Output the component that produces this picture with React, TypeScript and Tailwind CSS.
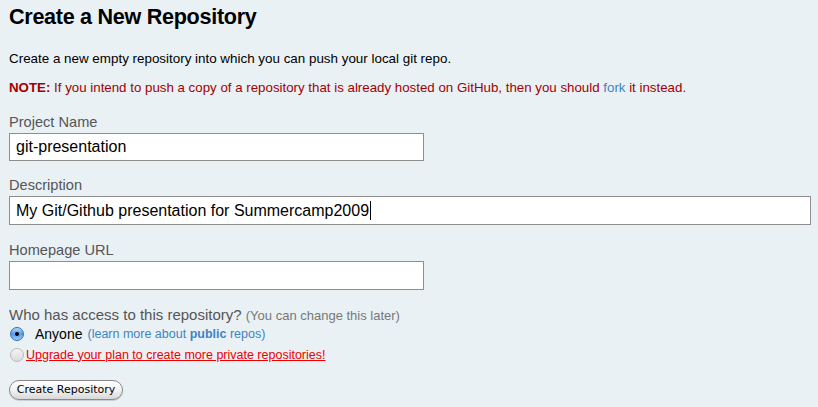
import React from "react";

export default function App() {
  const font = { fontFamily: '"Liberation Sans", Arial, sans-serif' };
  return (
    <div className="w-[818px] h-[407px] bg-[#e9f1f5] overflow-hidden text-black" style={font}>
      <div className="pl-[9px] pr-[8px] pt-[2px]">
        <h1 className="text-[21.6px] leading-[30px] font-bold tracking-[-0.3px]">Create a New Repository</h1>
        <p className="mt-[19px] text-[13.4px] leading-[16px]">
          Create a new empty repository into which you can push your local git repo.
        </p>
        <p className="mt-[13px] text-[13.3px] leading-[16px] text-[#a30000]">
          <b>NOTE:</b> If you intend to push a copy of a repository that is already hosted on GitHub, then you should{" "}
          <span className="text-[#4183c4]">fork</span> it instead.
        </p>

        <div className="mt-[18px] text-[14.6px] leading-[17px] text-[#555]">Project Name</div>
        <div className="mt-[2px] w-[415px] h-[28px] bg-white border border-[#8e8e8e] flex items-center px-[6px] text-[16px]">
          git-presentation
        </div>

        <div className="mt-[16px] text-[14.6px] leading-[17px] text-[#555]">Description</div>
        <div className="mt-[2px] w-[802px] h-[29px] bg-white border border-[#8e8e8e] flex items-center px-[6px] text-[16px]">
          My Git/Github presentation for Summercamp2009
          <span className="inline-block w-[1px] h-[19px] bg-black ml-[1px]" />
        </div>

        <div className="mt-[17px] text-[14.6px] leading-[17px] text-[#555]">Homepage URL</div>
        <div className="mt-[2px] w-[415px] h-[29px] bg-white border border-[#8e8e8e]" />

        <div className="mt-[16px] text-[15px] leading-[17px] text-[#555]">
          Who has access to this repository? <span className="text-[13px] text-[#777]">(You can change this later)</span>
        </div>
        <div className="mt-[1px] flex items-center h-[18px]">
          <span className="ml-[1px] w-[14px] h-[14px] rounded-full border border-[#3c6aa8] bg-gradient-to-b from-[#b5d7f7] via-[#4f9be8] to-[#9ccdf8] flex items-center justify-center">
            <span className="w-[4px] h-[4px] rounded-full bg-black" />
          </span>
          <span className="ml-[11px] text-[14px]">Anyone</span>
          <span className="ml-[5px] text-[12.5px] text-[#4183c4]">
            (learn more about <b>public</b> repos)
          </span>
        </div>
        <div className="mt-[3px] flex items-center h-[18px]">
          <span className="ml-[1px] w-[14px] h-[14px] rounded-full border border-[#b9b9b9] bg-gradient-to-b from-[#f4f4f4] to-[#dcdcdc]" />
          <span className="ml-[2px] text-[12.5px] text-[#e00] underline">
            Upgrade your plan to create more private repositories!
          </span>
        </div>
        <button
          className="mt-[16px] h-[20px] w-[114px] rounded-full border border-[#8a8a8a] bg-gradient-to-b from-white via-[#f3f3f3] to-[#d8d8d8] text-[11px] text-black flex items-center justify-center shadow-[0_1px_1px_rgba(0,0,0,0.15)]"
          style={{ fontFamily: '"DejaVu Sans", sans-serif' }}
        >
          Create Repository
        </button>
      </div>
    </div>
  );
}
